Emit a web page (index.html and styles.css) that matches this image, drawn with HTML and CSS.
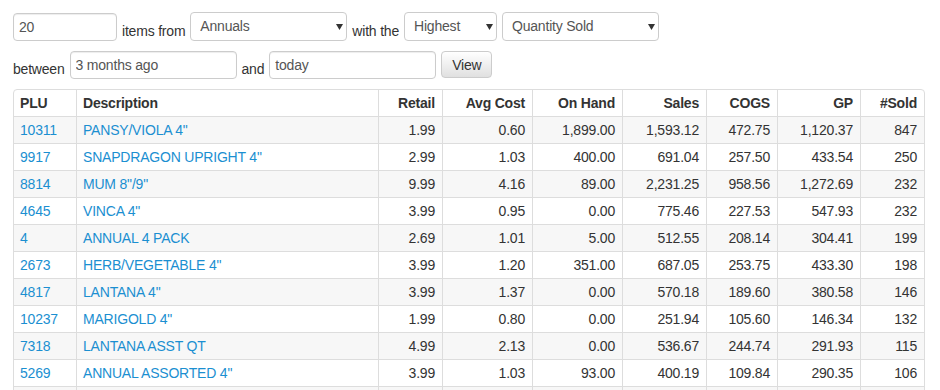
FILE: index.html
```html
<!DOCTYPE html>
<html>
<head>
<meta charset="utf-8">
<link rel="stylesheet" href="styles.css">
</head>
<body>
<div class="page">
  <form class="filters">
    <div class="filter-row row-one">
      <input class="field field-count" type="text" value="20">
      <span class="label">items from</span>
      <span class="select-wrap sel-dept">
        <select class="select"><option>Annuals</option></select>
        <svg class="caret" width="7" height="6" viewBox="0 0 7 6"><path d="M0 0H7L3.5 6Z" fill="#333"/></svg>
      </span>
      <span class="label">with the</span>
      <span class="select-wrap sel-order">
        <select class="select"><option>Highest</option></select>
        <svg class="caret" width="7" height="6" viewBox="0 0 7 6"><path d="M0 0H7L3.5 6Z" fill="#333"/></svg>
      </span>
      <span class="select-wrap sel-metric">
        <select class="select"><option>Quantity Sold</option></select>
        <svg class="caret" width="7" height="6" viewBox="0 0 7 6"><path d="M0 0H7L3.5 6Z" fill="#333"/></svg>
      </span>
    </div>
    <div class="filter-row row-two">
      <span class="label">between</span>
      <input class="field field-date" type="text" value="3 months ago">
      <span class="label">and</span>
      <input class="field field-date" type="text" value="today">
      <button class="btn" type="button">View</button>
    </div>
  </form>

  <div class="table-box">
    <table class="report">
      <colgroup>
        <col style="width:62px"><col style="width:302px"><col style="width:64px"><col style="width:90px"><col style="width:90px"><col style="width:84px"><col style="width:71px"><col style="width:83px"><col style="width:64px">
      </colgroup>
      <thead>
        <tr><th>PLU</th><th>Description</th><th class="num">Retail</th><th class="num">Avg Cost</th><th class="num">On Hand</th><th class="num">Sales</th><th class="num">COGS</th><th class="num">GP</th><th class="num">#Sold</th></tr>
      </thead>
      <tbody>
        <tr><td><a href="#">10311</a></td><td><a href="#">PANSY/VIOLA 4"</a></td><td class="num">1.99</td><td class="num">0.60</td><td class="num">1,899.00</td><td class="num">1,593.12</td><td class="num">472.75</td><td class="num">1,120.37</td><td class="num">847</td></tr>
        <tr><td><a href="#">9917</a></td><td><a href="#">SNAPDRAGON UPRIGHT 4"</a></td><td class="num">2.99</td><td class="num">1.03</td><td class="num">400.00</td><td class="num">691.04</td><td class="num">257.50</td><td class="num">433.54</td><td class="num">250</td></tr>
        <tr><td><a href="#">8814</a></td><td><a href="#">MUM 8"/9"</a></td><td class="num">9.99</td><td class="num">4.16</td><td class="num">89.00</td><td class="num">2,231.25</td><td class="num">958.56</td><td class="num">1,272.69</td><td class="num">232</td></tr>
        <tr><td><a href="#">4645</a></td><td><a href="#">VINCA 4"</a></td><td class="num">3.99</td><td class="num">0.95</td><td class="num">0.00</td><td class="num">775.46</td><td class="num">227.53</td><td class="num">547.93</td><td class="num">232</td></tr>
        <tr><td><a href="#">4</a></td><td><a href="#">ANNUAL 4 PACK</a></td><td class="num">2.69</td><td class="num">1.01</td><td class="num">5.00</td><td class="num">512.55</td><td class="num">208.14</td><td class="num">304.41</td><td class="num">199</td></tr>
        <tr><td><a href="#">2673</a></td><td><a href="#">HERB/VEGETABLE 4"</a></td><td class="num">3.99</td><td class="num">1.20</td><td class="num">351.00</td><td class="num">687.05</td><td class="num">253.75</td><td class="num">433.30</td><td class="num">198</td></tr>
        <tr><td><a href="#">4817</a></td><td><a href="#">LANTANA 4"</a></td><td class="num">3.99</td><td class="num">1.37</td><td class="num">0.00</td><td class="num">570.18</td><td class="num">189.60</td><td class="num">380.58</td><td class="num">146</td></tr>
        <tr><td><a href="#">10237</a></td><td><a href="#">MARIGOLD 4"</a></td><td class="num">1.99</td><td class="num">0.80</td><td class="num">0.00</td><td class="num">251.94</td><td class="num">105.60</td><td class="num">146.34</td><td class="num">132</td></tr>
        <tr><td><a href="#">7318</a></td><td><a href="#">LANTANA ASST QT</a></td><td class="num">4.99</td><td class="num">2.13</td><td class="num">0.00</td><td class="num">536.67</td><td class="num">244.74</td><td class="num">291.93</td><td class="num">115</td></tr>
        <tr><td><a href="#">5269</a></td><td><a href="#">ANNUAL ASSORTED 4"</a></td><td class="num">3.99</td><td class="num">1.03</td><td class="num">93.00</td><td class="num">400.19</td><td class="num">109.84</td><td class="num">290.35</td><td class="num">106</td></tr>
        <tr><td>&nbsp;</td><td></td><td></td><td></td><td></td><td></td><td></td><td></td><td></td></tr>
      </tbody>
    </table>
  </div>
</div>
</body>
</html>
```

FILE: styles.css
```css
* { box-sizing: border-box; }

html, body {
  margin: 0;
  padding: 0;
  background: #fff;
}

body {
  font-family: "Liberation Sans", Arial, sans-serif;
  font-size: 14px;
  line-height: 20px;
  letter-spacing: -0.2px;
  color: #333;
}

.page {
  padding: 12px 15px 0 13px;
}

.filters {
  display: flex;
  flex-direction: column;
  gap: 10px;
  margin: 0 0 10px 0;
}

.filter-row {
  display: flex;
  align-items: flex-end;
  gap: 5px;
}

.label {
  line-height: 20px;
  color: #333;
  white-space: nowrap;
}

.field {
  height: 28px;
  padding: 4px 5px;
  border: 1px solid #ccc;
  border-radius: 4px;
  font-family: inherit;
  font-size: 14px;
  letter-spacing: -0.2px;
  color: #555;
  background: #fff;
  box-shadow: inset 0 1px 1px rgba(0,0,0,0.075);
  outline: none;
}

.field-count { width: 104px; }
.field-date { width: 167px; }

.select-wrap {
  position: relative;
  display: block;
}

.select {
  -webkit-appearance: none;
  appearance: none;
  display: block;
  height: 29px;
  padding: 3px 20px 4px 9px;
  border: 1px solid #ccc;
  border-radius: 4px;
  font-family: inherit;
  font-size: 14px;
  letter-spacing: -0.2px;
  color: #555;
  background: #fff;
  outline: none;
}

.sel-dept .select { width: 157px; }
.sel-order .select { width: 93px; }
.sel-metric .select { width: 157px; }

.caret {
  position: absolute;
  right: 4px;
  top: 12px;
  pointer-events: none;
}

.btn {
  height: 27px;
  width: 51px;
  padding: 0;
  margin-bottom: 1px;
  border: 1px solid #ccc;
  border-radius: 4px;
  font-family: inherit;
  font-size: 14px;
  letter-spacing: -0.2px;
  color: #333;
  background: linear-gradient(to bottom, #fff 0%, #e0e0e0 100%);
}

.table-box {
  width: 912px;
  border: 1px solid #ddd;
  border-radius: 4px;
  overflow: hidden;
}

.report {
  table-layout: fixed;
  width: 910px;
  border-collapse: separate;
  border-spacing: 0;
}

.report th,
.report td {
  padding: 3px 6px;
  line-height: 20px;
  height: 27px;
  text-align: left;
  vertical-align: top;
  border-left: 1px solid #ddd;
  white-space: nowrap;
  overflow: hidden;
}

.report th:first-child,
.report td:first-child {
  border-left: none;
}

.report th {
  height: 26px;
  font-weight: bold;
  color: #333;
}

.report td {
  border-top: 1px solid #ddd;
  color: #333;
}

.report .num { text-align: right; padding-right: 7px; }

.report tbody tr:nth-child(odd) td {
  background: #f7f7f7;
}

.report a {
  color: #1b8fd1;
  text-decoration: none;
}
```
